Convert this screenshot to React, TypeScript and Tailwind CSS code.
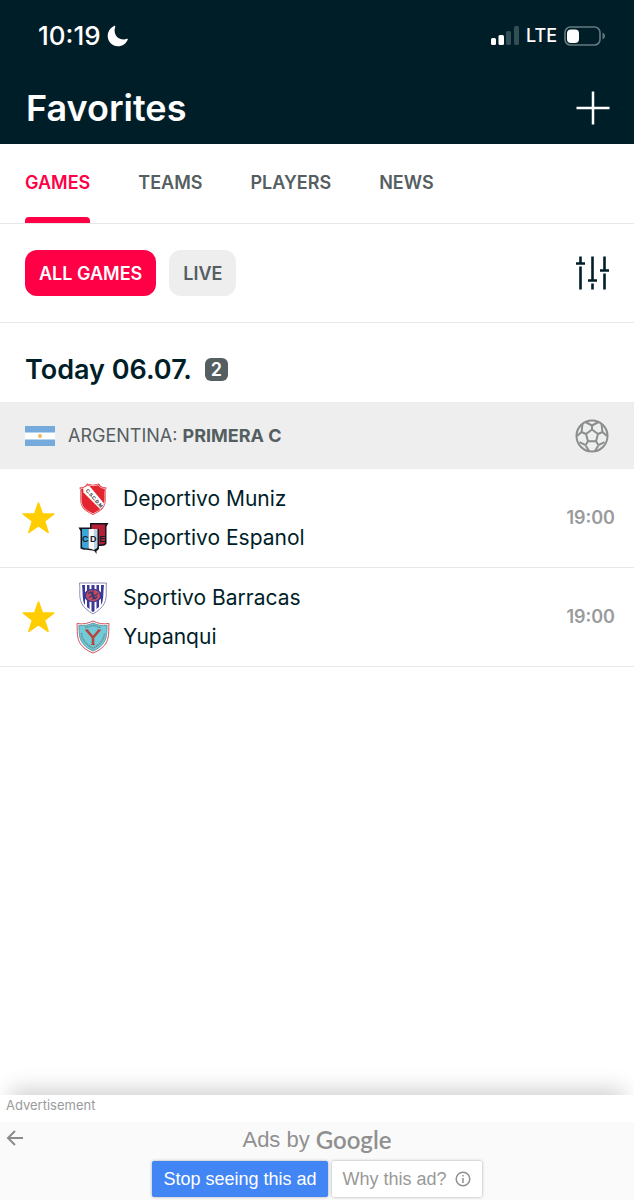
import type { ReactNode } from "react";

type Team = { name: string; crest: ReactNode };
type Match = { id: string; home: Team; away: Team; time: string };

function MunizCrest() {
  return (
    <svg viewBox="0 0 32 34" className="h-[34px] w-8" aria-hidden="true">
      <path d="M2.500 5.500C6.500 5.500 9 4 10 1.500c4 1.500 8 1.500 12 0 1 2.500 3.500 4 7.500 4-2 8.500 1 14-3 20-2 3-6 5-10.500 7.500-4.500-2.500-8.500-4.500-10.500-7.500-4-6-1-11.500-3-20Z" fill="#e3252f" />
      <path d="M3.600 6.600C7.500 6.300 9.800 4.800 10.800 2.800c3.500 1.100 7 1.100 10.400 0 1 2 3.500 3.500 7.200 3.800-1.500 8 1 13-2.700 18.300-2 3-5.500 4.700-9.700 7-4.200-2.300-7.700-4-9.700-7C2.600 19.600 5.100 14.600 3.600 6.600Z" fill="none" stroke="#fbd5d5" strokeWidth=".8" />
      <path d="M6.200 6.200 10.500 4 12.500 4 27 21.500 26 24.500 23.500 27.500 6.500 10.500Z" fill="#fff" />
      <text transform="translate(8.500 8.800) rotate(49)" fontFamily="Liberation Sans, sans-serif" fontSize="4.800" fontWeight="700" fill="#222">
        C.S.C.D.M.
      </text>
    </svg>
  );
}

function EspanolCrest() {
  return (
    <svg viewBox="0 0 32 34" className="h-[34px] w-8" aria-hidden="true">
      <path d="M13 2H31.500L29.500 5.500V22.500C28.500 25 25 25 22 25V27.500C21 29 20.500 29.500 19.500 30V33L17.500 30C12 28.500 6 29.500 3.500 27.500V10L1.500 6.500H13Z" fill="#15151d" />
      <path d="M14.500 3.500H28V22C27 23.500 24 23.500 22 23.500V8H14.500Z" fill="#b52036" />
      <path d="M5 8H11.500V27.500C9 27.500 6 27.500 5 26Z" fill="#3ba4da" />
      <path d="M11.500 8H17V29C15 28 13.500 27.800 11.500 27.500Z" fill="#f7f8fa" />
      <path d="M17 8H20.500V26C20 27.500 18.500 28 17 29Z" fill="#b9d3e4" />
      <g fontFamily="Liberation Sans, sans-serif" fontSize="9" fontWeight="700" fill="#17202c">
        <text x="5" y="20.500">C</text>
        <text x="13" y="20.500">D</text>
        <text x="22" y="20.500">E</text>
      </g>
    </svg>
  );
}

function BarracasCrest() {
  return (
    <svg viewBox="0 0 32 34" className="h-[34px] w-8" aria-hidden="true">
      <path d="M2.500 2H29.500C28.500 10 30.500 15 27.500 22 25.500 27 20.500 30 16 33 11.500 30 6.500 27 4.500 22 1.500 15 3.500 10 2.500 2Z" fill="#fff" stroke="#8e8bb2" strokeWidth="1" />
      <path d="M5 4H8V24C5 20 6 11 5 4ZM10 4H12.500V28L10 26ZM14.500 4H17.500V30L16 31 14.500 30ZM19.500 4H22V26L19.500 28ZM24 4H27C26 11 27 20 24 24Z" fill="#3a3799" />
      <ellipse cx="16" cy="14.500" rx="9" ry="6.800" fill="#3a3799" />
      <ellipse cx="16" cy="14.500" rx="7" ry="5.800" fill="#c34d5c" />
      <path d="M11 13c2-3 4-2 5 0s3 2 5-1M12 17c1-2 3-3 4-1s3 2 4-1M16 9v10M13 11l6 7" fill="none" stroke="#413673" strokeWidth="1.200" />
    </svg>
  );
}

function YupanquiCrest() {
  return (
    <svg viewBox="0 0 34 34" className="h-[34px] w-[34px]" aria-hidden="true">
      <path d="M1 3.500C7 4.500 12 3.500 17 1 22 3.500 27 4.500 33 3.500 32.500 11 33.500 18 29.500 24c-3 4-7 7-12.500 9C11.500 31 7.500 28 4.500 24 .5 18 1.500 11 1 3.500Z" fill="#fff" stroke="#d0525c" strokeWidth="1" />
      <path d="M2.800 5.500C8 6 13 5 17 3 21 5 26 6 31.200 5.500 30.700 12 31.200 18 27.500 23c-2.500 3.500-6 6-10.500 8C12.500 29 9 26.500 6.500 23 2.800 18 3.300 12 2.800 5.500Z" fill="#72cbd8" stroke="#4d8c99" strokeWidth=".8" />
      <path d="M9 7.300c3-.2 5-1 8-2 3 1 5 1.800 8 2M5.500 13c.3 4 1.500 7 4.500 10 2 2 4 4 7 5 3-1 5-3 7-5 3-3 4.200-6 4.500-10" fill="none" stroke="#698b91" strokeWidth="1.600" strokeDasharray="1.400 .7" />
      <path d="M10.500 10 17 17.500 23.500 10M17 17v7.500" fill="none" stroke="#b6463e" strokeWidth="2.600" />
      <path d="M8.800 10h3.600M21.600 10h3.600M15 24.500h4" fill="none" stroke="#b6463e" strokeWidth="1.200" />
    </svg>
  );
}

const TABS = ["GAMES", "TEAMS", "PLAYERS", "NEWS"];

const MATCHES: Match[] = [
  {
    id: "muniz-espanol",
    home: { name: "Deportivo Muniz", crest: <MunizCrest /> },
    away: { name: "Deportivo Espanol", crest: <EspanolCrest /> },
    time: "19:00",
  },
  {
    id: "barracas-yupanqui",
    home: { name: "Sportivo Barracas", crest: <BarracasCrest /> },
    away: { name: "Yupanqui", crest: <YupanquiCrest /> },
    time: "19:00",
  },
];

function StatusBar() {
  return (
    <div className="flex h-[72px] items-center justify-between pr-7 pl-[38px]">
      <div className="flex items-center gap-[6px]">
        <span className="text-[26px] leading-8 font-medium">10:19</span>
        <svg viewBox="0 0 22 22" className="size-[22px]" fill="currentColor" aria-hidden="true">
          <path d="M8.200 1.200C7.800.7 7.300.8 6.700 1.200 3 3.200.7 6.800.7 11c0 5.700 4.600 10.300 10.300 10.300 4.400 0 8.200-2.700 9.700-6.500.3-.8-.1-1.300-.9-1-1 .4-2 .6-3.200.6-5.200 0-9-3.800-9-9 0-1.200.2-2.200.6-3.200.1-.4.100-.700 0-1Z" />
        </svg>
      </div>
      <div className="flex items-center gap-[7px]">
        <svg viewBox="0 0 28 20" className="h-5 w-7" aria-hidden="true">
          <rect x="0" y="12" width="5" height="7" rx="1.500" fill="#fff" />
          <rect x="7.500" y="9" width="5.500" height="10" rx="1.500" fill="#fff" />
          <rect x="15" y="5" width="5" height="14" rx="1.500" fill="#344e55" />
          <rect x="23" y="0" width="5" height="19" rx="1.500" fill="#344e55" />
        </svg>
        <span className="text-[18px] leading-6 font-medium">LTE</span>
        <svg viewBox="0 0 42 20" className="h-5 w-[42px]" aria-hidden="true">
          <rect x="1" y="1" width="35" height="18" rx="5.500" fill="none" stroke="#647a7f" strokeWidth="1.600" />
          <rect x="3" y="3.500" width="12" height="13.500" rx="4" fill="#fff" />
          <path d="M38.500 6.500c1.600.8 2.500 2 2.500 3.500s-.9 2.700-2.500 3.500Z" fill="#647a7f" />
        </svg>
      </div>
    </div>
  );
}

function BallIcon() {
  return (
    <svg viewBox="0 0 34 34" className="size-[34px]" fill="none" stroke="#8b8e8f" strokeWidth="2" strokeLinejoin="round" aria-hidden="true">
      <circle cx="17" cy="17" r="15.500" />
      <path d="m17 10.500 6 4.500-2 7.200h-8L11 15ZM17 10.500V6.500M17 6.500 10.500 3M17 6.500 23.500 3M23 15l4.500-2M27.500 13l-1-8M27.500 13l4.500 4M21 22.200l2.500 4M23.500 26.200l6-3M23.500 26.200 20 32M13 22.200l-2.500 4M10.500 26.200l-6-3M10.500 26.200 14 32M11 15l-4.500-2M6.500 13l1-8M6.500 13 2 17" />
    </svg>
  );
}

function MatchRow({ match }: { match: Match }) {
  return (
    <li className="flex items-center border-b border-[#e8e8e8] py-[10px] pr-[19px] pl-[22px]">
      <button type="button" aria-label="Remove from favorites" className="mr-5">
        <svg viewBox="0 0 34 34" className="size-[34px]" aria-hidden="true">
          <path d="m16.500 2 3.900 11h11.400l-9.200 7.100 3.500 11.400-9.600-6.900-9.600 6.900 3.500-11.400L1.200 13h11.400Z" fill="#ffcd00" stroke="#ffcd00" strokeWidth="1.500" strokeLinejoin="round" />
        </svg>
      </button>
      <div className="flex-1">
        {[match.home, match.away].map((team) => (
          <div key={team.name} className="flex h-[39px] items-center gap-[13px]">
            <span className="flex w-[34px] justify-center">{team.crest}</span>
            <span className="text-[21px] leading-7 text-[#001e28]">{team.name}</span>
          </div>
        ))}
      </div>
      <time className="text-[18px] leading-6 font-semibold text-[#999b9c]">{match.time}</time>
    </li>
  );
}

export default function App() {
  return (
    <div className="flex min-h-screen flex-col overflow-x-hidden bg-white font-['Inter',sans-serif] text-[#001e28]">
      <header className="bg-[#001e28] text-white">
        <StatusBar />
        <div className="flex h-[72px] items-center justify-between pr-6 pl-[26px]">
          <h1 className="text-[36px] leading-10 font-semibold">Favorites</h1>
          <button type="button" aria-label="Add favorite">
            <svg viewBox="0 0 34 34" className="size-[34px]" stroke="currentColor" strokeWidth="2.500" aria-hidden="true">
              <path d="M17 .5v33M.5 17h33" />
            </svg>
          </button>
        </div>
      </header>

      <nav className="flex h-20 gap-12 border-b border-[#e8e8e8] px-[25px]">
        {TABS.map((tab, i) => (
          <a
            key={tab}
            href={`#${tab.toLowerCase()}`}
            className={
              i === 0
                ? "flex flex-col justify-between text-[18px] leading-6 font-semibold text-[#ff0046]"
                : "text-[18px] leading-6 font-semibold text-[#555e61]"
            }
          >
            <span className="block pt-[27px]">{tab}</span>
            {i === 0 && <span className="h-[6px] rounded-t bg-[#ff0046]" />}
          </a>
        ))}
      </nav>

      {/* Filters */}
      <div className="flex h-[99px] items-center gap-[13px] border-b border-[#e8e8e8] px-[25px]">
        <button type="button" className="h-[46px] rounded-xl bg-[#ff0046] px-[14px] text-[18px] font-semibold text-white">
          ALL GAMES
        </button>
        <button type="button" className="h-[46px] rounded-xl bg-[#eee] px-[14px] text-[18px] font-semibold text-[#555e61]">
          LIVE
        </button>
        <button type="button" aria-label="Filter settings" className="ml-auto">
          <svg viewBox="0 0 34 34" className="size-[34px]" fill="none" stroke="#001e28" strokeWidth="2.600" aria-hidden="true">
            <path d="M5.500.5v7M1 7.500h9M5.500 10.500v23M17.500.5v24M13 24.500h9M17.500 27.500v6M29.500.5v14M25 14.500h9M29.500 17.500v16" />
          </svg>
        </button>
      </div>

      <main>
        <div className="flex h-[79px] items-center gap-[13px] px-[25px] pt-[14px]">
          <h2 className="text-[27px] leading-8 font-semibold">Today 06.07.</h2>
          <span className="flex size-[23px] items-center justify-center rounded-md bg-[#555e61] text-[18px] leading-none font-semibold text-white">
            2
          </span>
        </div>

        <section>
          <div className="flex h-[67px] items-center bg-[#eee] px-[25px]">
            <svg viewBox="0 0 30 20" className="mr-[13px] h-5 w-[30px]" aria-hidden="true">
              <path d="M0 0h30v20H0Z" fill="#fff" />
              <path d="M0 0h30v6.500H0ZM0 13.500h30V20H0Z" fill="#75aadb" />
              <circle cx="15" cy="10" r="2" fill="#f1b765" />
            </svg>
            <h3 className="text-[18px] leading-6 font-normal text-[#555e61]">
              ARGENTINA: <strong className="font-bold">PRIMERA C</strong>
            </h3>
            <span className="ml-auto">
              <BallIcon />
            </span>
          </div>
          <ul>
            {MATCHES.map((match) => (
              <MatchRow key={match.id} match={match} />
            ))}
          </ul>
        </section>
      </main>

      {/* Ad banner */}
      <footer className="mt-auto shadow-[0_-16px_20px_-10px_rgba(0,0,0,0.18)]">
        <p className="h-[27px] bg-white px-[6px] text-[13px] leading-5 text-[#999b9c]">Advertisement</p>
        <div className="relative h-[78px] bg-[#fafafa] pt-[4px] font-['Liberation_Sans',sans-serif]">
          <button type="button" aria-label="Back" className="absolute top-2 left-[6px]">
            <svg viewBox="0 0 18 16" className="h-4 w-[18px]" fill="none" stroke="#8b8b8b" strokeWidth="2" aria-hidden="true">
              <path d="M17 8H2M9 1 2 8l7 7" />
            </svg>
          </button>
          <div className="flex h-7 items-center justify-center gap-[6px] text-[22px] leading-7 text-[#909090]">
            <span>Ads by</span>
            <span className="font-['Lato',sans-serif] text-[24px] font-semibold">Google</span>
          </div>
          <div className="mt-[7px] flex justify-center gap-1">
            <button type="button" className="h-9 rounded-xs bg-[#4285f4] px-[11px] text-[18px] text-white shadow-[0_0_3px_rgba(0,0,0,0.35)]">
              Stop seeing this ad
            </button>
            <button type="button" className="flex h-9 items-center gap-2 rounded-xs bg-white px-[11px] text-[18px] text-[#999] shadow-[0_0_3px_rgba(0,0,0,0.35)]">
              Why this ad?
              <svg viewBox="0 0 16 16" className="size-4" fill="none" stroke="#909090" strokeWidth="1.500" aria-hidden="true">
                <circle cx="8" cy="8" r="6.800" />
                <path d="M8 7v5M8 4v1.600" />
              </svg>
            </button>
          </div>
        </div>
      </footer>
    </div>
  );
}
